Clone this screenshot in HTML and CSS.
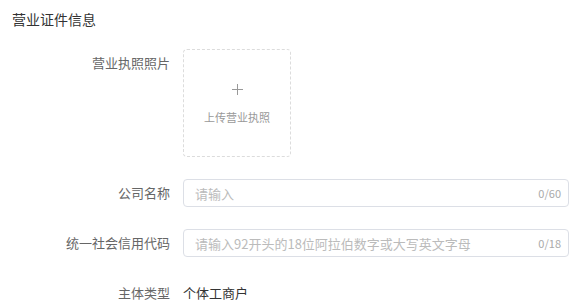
FILE: index.html
```html
<!DOCTYPE html>
<html lang="zh-CN">
<head>
    <meta charset="UTF-8" />
    <title>营业证件信息</title>
    <link rel="stylesheet" href="styles.css">
</head>
<body>
    <div class="page">
        <h2 class="section-title">营业证件信息</h2>
        <form class="form">
            <div class="form-row">
                <label class="form-label">营业执照照片</label>
                <div class="form-control">
                    <div class="upload">
                        <svg class="upload-plus" width="11" height="11" viewBox="0 0 11 11" aria-hidden="true">
                            <path d="M5.5 0V11M0 5.5H11" stroke="#999" stroke-width="1" fill="none"/>
                        </svg>
                        <span class="upload-text">上传营业执照</span>
                    </div>
                </div>
            </div>
            <div class="form-row">
                <label class="form-label">公司名称</label>
                <div class="form-control">
                    <div class="input">
                        <input type="text" placeholder="请输入">
                        <span class="count">0/60</span>
                    </div>
                </div>
            </div>
            <div class="form-row">
                <label class="form-label">统一社会信用代码</label>
                <div class="form-control">
                    <div class="input">
                        <input type="text" placeholder="请输入92开头的18位阿拉伯数字或大写英文字母">
                        <span class="count">0/18</span>
                    </div>
                </div>
            </div>
            <div class="form-row">
                <label class="form-label">主体类型</label>
                <div class="form-control">
                    <span class="value">个体工商户</span>
                </div>
            </div>
        </form>
    </div>
</body>
</html>
```

FILE: styles.css
```css
html, body {
    margin: 0;
    background: #fff;
    font-family: "Noto Sans CJK SC", "Liberation Sans", sans-serif;
    overflow: hidden;
}
.page {
    padding: 9px 13px 0 12px;
}
.section-title {
    margin: 0;
    font-size: 14px;
    font-weight: normal;
    line-height: 20px;
    color: #333;
}
.form {
    margin-top: 20px;
}
.form-row {
    display: flex;
    align-items: flex-start;
    gap: 13px;
    margin-bottom: 22px;
}
.form-row:last-child {
    margin-bottom: 0;
}
.form-label {
    width: 158px;
    flex-shrink: 0;
    text-align: right;
    font-size: 13px;
    line-height: 28px;
    color: #666;
}
.form-control {
    flex: 1;
    min-width: 0;
}
.upload {
    width: 106px;
    height: 106px;
    border: 1px dashed #dcdcdc;
    border-radius: 4px;
    display: flex;
    flex-direction: column;
    align-items: center;
}
.upload-plus {
    margin-top: 34px;
}
.upload-text {
    margin-top: 15px;
    font-size: 11px;
    line-height: 14px;
    color: #999;
}
.input {
    display: flex;
    align-items: center;
    height: 26px;
    border: 1px solid #dcdfe6;
    border-radius: 4px;
    padding: 0 7px 0 11px;
}
.input input {
    flex: 1;
    min-width: 0;
    border: 0;
    outline: 0;
    padding: 0;
    font: inherit;
    font-size: 13px;
    color: #333;
    background: transparent;
}
.input input::placeholder {
    color: #bbb;
}
.count {
    font-size: 11px;
    color: #aaa;
}
.value {
    font-size: 13px;
    line-height: 28px;
    color: #333;
}
```
